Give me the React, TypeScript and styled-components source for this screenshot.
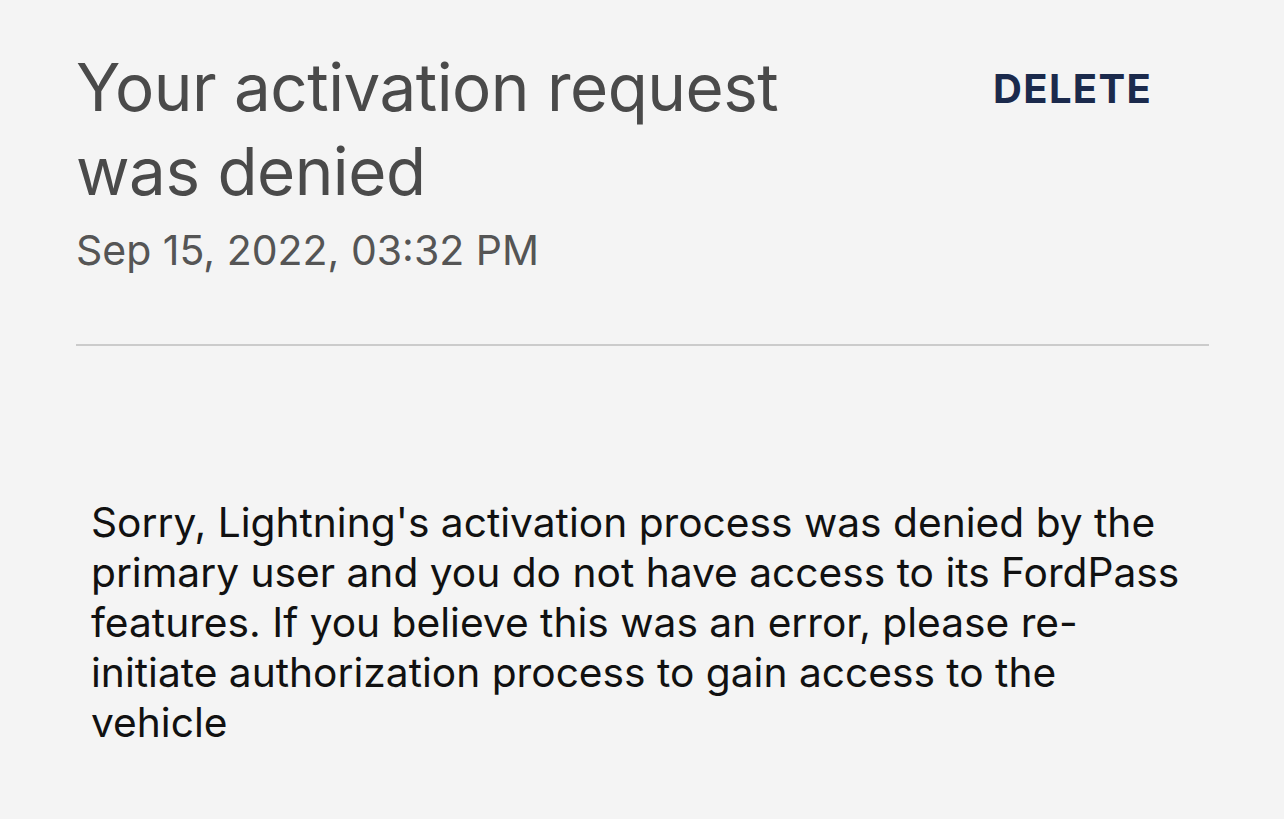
import React from 'react';
import styled, { createGlobalStyle } from 'styled-components';

const GlobalStyle = createGlobalStyle`
  html, body {
    margin: 0;
    padding: 0;
    background: #f4f4f4;
  }
  body {
    font-family: Inter, "Noto Sans", "Liberation Sans", sans-serif;
  }
`;

const Page = styled.div`
  width: 1284px;
  height: 819px;
  box-sizing: border-box;
  padding: 46px 75px 0 76px;
  background: #f4f4f4;
  overflow: hidden;
`;

const Header = styled.div`
  display: flex;
  justify-content: space-between;
  align-items: flex-start;
  padding-bottom: 69px;
  border-bottom: 2px solid #cbcbcb;
`;

const TitleBlock = styled.div`
  display: flex;
  flex-direction: column;
`;

const Title = styled.h1`
  margin: 0;
  width: 760px;
  font-size: 65.5px;
  line-height: 84px;
  font-weight: 400;
  color: #4a4a4a;
  letter-spacing: -0.5px;
`;

const Timestamp = styled.div`
  margin-top: 11px;
  font-size: 41px;
  line-height: 50px;
  color: #555;
`;

const DeleteButton = styled.button`
  margin: 18px 57px 0 0;
  padding: 0;
  background: none;
  border: none;
  font-family: inherit;
  font-size: 40px;
  font-weight: 700;
  letter-spacing: 1.3px;
  color: #1b2a4c;
  cursor: pointer;
`;

const Message = styled.p`
  margin: 152px 20px 0 15px;
  font-size: 40.7px;
  line-height: 50px;
  color: #111;
`;

export default function App() {
  return (
    <>
      <GlobalStyle />
      <Page>
        <Header>
          <TitleBlock>
            <Title>Your activation request was denied</Title>
            <Timestamp>Sep 15, 2022, 03:32 PM</Timestamp>
          </TitleBlock>
          <DeleteButton>DELETE</DeleteButton>
        </Header>
        <Message>
          Sorry, Lightning's activation process was denied by the primary user and you do not have
          access to its FordPass features. If you believe this was an error, please re-initiate
          authorization process to gain access to the vehicle
        </Message>
      </Page>
    </>
  );
}
